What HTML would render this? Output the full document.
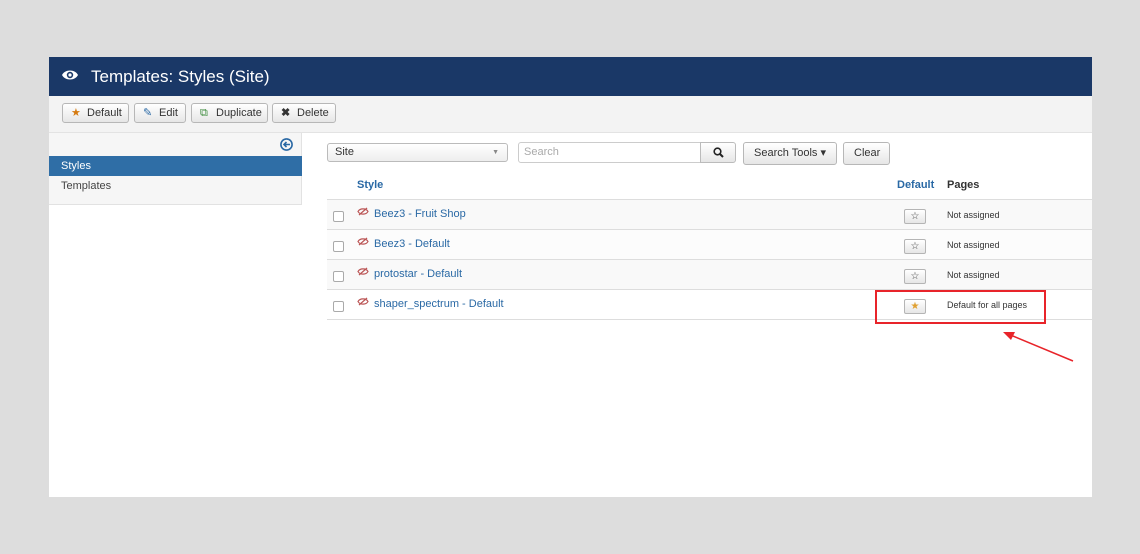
<!DOCTYPE html><html><head><style>
body{margin:0;width:1140px;height:554px;background:#dddddd;font-family:"Liberation Sans",sans-serif;font-size:11px;position:relative;overflow:hidden}
.p{position:absolute;left:49px;top:57px;width:1043px;height:440px;background:#fff}
.hd{position:absolute;left:0;top:0;width:1043px;height:39px;background:#1a3867;color:#fff;font-size:17px}
.tb{position:absolute;left:0;top:39px;width:1043px;height:36px;background:#f3f3f3;border-bottom:1px solid #e3e3e3}
.b{position:absolute;top:7px;height:20px;border:1px solid #b7b7b7;border-radius:3px;background:linear-gradient(#fff,#e6e6e6);font-size:11px;line-height:18px;color:#333;box-sizing:border-box;padding-left:24px}
.b i{position:absolute;left:8px;top:0;font-style:normal}
.sb{position:absolute;left:0;top:76px;width:252px;height:71px;background:#f6f6f6;border:1px solid #e2e2e2;border-top:0;border-left:0}
.a{color:#2a69a5}
.row{position:absolute;left:278px;width:765px;height:29px;border-top:1px solid #ddd}
.cb{position:absolute;left:6px;top:11px;width:9px;height:9px;border:1px solid #aaa;border-radius:2px;background:#fff}
.ey{position:absolute;left:30px;top:7px}
.nm{position:absolute;left:47px;top:8px;color:#2a69a5;font-size:11px}
.st{position:absolute;left:577px;top:9px;width:20px;height:13px;border:1px solid #b5b5b5;border-radius:2px;background:linear-gradient(#fff,#e6e6e6);font-size:10px;text-align:center;line-height:13px;color:#444}
.pg{position:absolute;left:620px;top:10px;font-size:9px;color:#333}
</style></head><body>
<div class="p">
<div class="hd"><svg style="position:absolute;left:13px;top:12px" width="16" height="12" viewBox="0 0 16 12"><path d="M0 6C3 0 13 0 16 6C13 12 3 12 0 6Z" fill="#fff"/><circle cx="8" cy="6" r="3.2" fill="#1a3867"/><circle cx="8" cy="6" r="1.6" fill="#fff"/></svg><span style="position:absolute;left:42px;top:10px">Templates: Styles (Site)</span></div>
<div class="tb">
<div class="b" style="left:13px;width:67px"><i style="color:#d57a10">★</i>Default</div>
<div class="b" style="left:85px;width:52px"><i style="color:#2a69a5">✎</i>Edit</div>
<div class="b" style="left:142px;width:77px"><i style="color:#3a8a3a">⧉</i>Duplicate</div>
<div class="b" style="left:223px;width:64px"><i style="font-weight:bold">✖</i>Delete</div>
</div>
<div class="sb">
<svg style="position:absolute;left:231px;top:5px" width="13" height="13" viewBox="0 0 13 13"><circle cx="6.5" cy="6.5" r="5.6" fill="none" stroke="#2a69a5" stroke-width="1.6"/><path d="M10 6.5H4M6.5 4L4 6.5L6.5 9" fill="none" stroke="#2a69a5" stroke-width="1.6"/></svg>
<div style="position:absolute;left:0;top:23px;width:253px;height:20px;background:#2f6ea6;color:#fff;line-height:20px;padding-left:12px;box-sizing:border-box">Styles</div>
<div style="position:absolute;left:12px;top:47px;color:#444">Templates</div>
</div>
<div style="position:absolute;left:278px;top:86px;width:181px;height:19px;border:1px solid #bbb;border-radius:3px;background:linear-gradient(#fff,#eee);box-sizing:border-box;line-height:17px;padding-left:7px;color:#333">Site<span style="position:absolute;right:8px;font-size:7px;color:#888">▼</span></div>
<div style="position:absolute;left:469px;top:85px;width:183px;height:21px;border:1px solid #ccc;border-radius:3px 0 0 3px;box-sizing:border-box;line-height:19px;padding-left:5px;color:#aaa">Search</div>
<div style="position:absolute;left:651px;top:85px;width:36px;height:21px;border:1px solid #bbb;border-radius:0 3px 3px 0;background:linear-gradient(#fff,#e6e6e6);box-sizing:border-box"><svg style="position:absolute;left:12px;top:4px" width="11" height="11"><circle cx="4.5" cy="4.5" r="3.3" fill="none" stroke="#222" stroke-width="1.6"/><path d="M7 7L10 10" stroke="#222" stroke-width="2"/></svg></div>
<div class="b" style="left:694px;top:85px;width:94px;height:23px;padding-left:10px;line-height:21px">Search Tools ▾</div>
<div class="b" style="left:794px;top:85px;width:47px;height:23px;padding-left:10px;line-height:21px">Clear</div>
<div style="position:absolute;left:308px;top:122px;font-weight:bold" class="a">Style</div>
<div style="position:absolute;left:848px;top:122px;font-weight:bold" class="a">Default</div>
<div style="position:absolute;left:898px;top:122px;font-weight:bold;color:#333">Pages</div>
<div class="row" style="top:142px;background:#f9f9f9"><div class="cb"></div><svg class="ey" width="12" height="9" viewBox="0 0 12 9"><path d="M1 4.5C3 1 9 1 11 4.5C9 8 3 8 1 4.5Z" fill="none" stroke="#b55" stroke-width="1.2"/><path d="M2 8L10 1" stroke="#b55" stroke-width="1.2"/></svg><div class="nm">Beez3 - Fruit Shop</div><div class="st">☆</div><div class="pg">Not assigned</div></div>
<div class="row" style="top:172px;background:#fcfcfc"><div class="cb"></div><svg class="ey" width="12" height="9" viewBox="0 0 12 9"><path d="M1 4.5C3 1 9 1 11 4.5C9 8 3 8 1 4.5Z" fill="none" stroke="#b55" stroke-width="1.2"/><path d="M2 8L10 1" stroke="#b55" stroke-width="1.2"/></svg><div class="nm">Beez3 - Default</div><div class="st">☆</div><div class="pg">Not assigned</div></div>
<div class="row" style="top:202px;background:#f9f9f9"><div class="cb"></div><svg class="ey" width="12" height="9" viewBox="0 0 12 9"><path d="M1 4.5C3 1 9 1 11 4.5C9 8 3 8 1 4.5Z" fill="none" stroke="#b55" stroke-width="1.2"/><path d="M2 8L10 1" stroke="#b55" stroke-width="1.2"/></svg><div class="nm">protostar - Default</div><div class="st">☆</div><div class="pg">Not assigned</div></div>
<div class="row" style="top:232px;background:#fff;border-bottom:1px solid #ddd"><div class="cb"></div><svg class="ey" width="12" height="9" viewBox="0 0 12 9"><path d="M1 4.5C3 1 9 1 11 4.5C9 8 3 8 1 4.5Z" fill="none" stroke="#b55" stroke-width="1.2"/><path d="M2 8L10 1" stroke="#b55" stroke-width="1.2"/></svg><div class="nm">shaper_spectrum - Default</div><div class="st" style="color:#e0a030">★</div><div class="pg">Default for all pages</div></div>
<div style="position:absolute;left:826px;top:233px;width:171px;height:34px;border:2px solid #e8242a;box-sizing:border-box"></div>
</div>
<svg style="position:absolute;left:0;top:0" width="1140" height="554"><path d="M1073 361L1008 334" stroke="#e8242a" stroke-width="1.5"/><path d="M1003 332L1015 332L1011 340Z" fill="#e8242a"/></svg>
</body></html>
